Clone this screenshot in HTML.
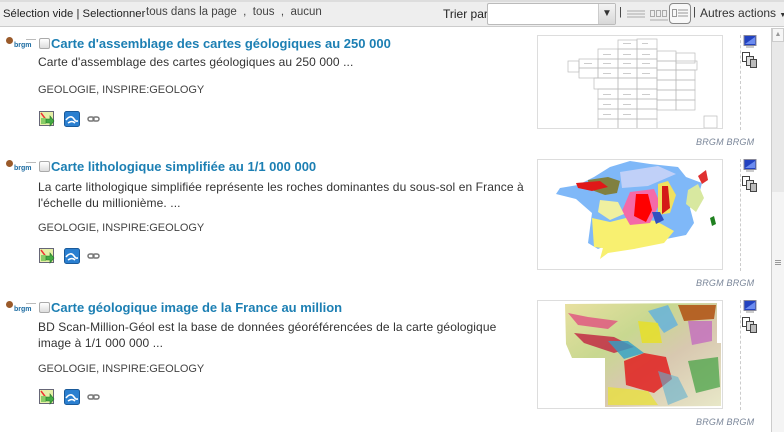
<!DOCTYPE html>
<html><head><meta charset="utf-8"><style>
*{margin:0;padding:0;box-sizing:border-box}
body{width:784px;height:432px;overflow:hidden;background:#fff;font-family:"Liberation Sans",sans-serif;position:relative;color:#333}
.abs{position:absolute}
.top{position:absolute;left:0;top:0;width:784px;height:27px;background:#eee;border-top:2px solid #ddd;border-bottom:1px solid #ccc}
.t{position:absolute;font-size:11px;white-space:nowrap}
.title{position:absolute;left:51px;font-size:13px;font-weight:bold;color:#1c7fb3;white-space:nowrap}
.desc{position:absolute;left:38px;font-size:12px;color:#333;line-height:16px;width:490px;letter-spacing:.1px}
.kw{position:absolute;left:38px;font-size:11px;color:#444}
.cb{position:absolute;left:39px;width:11px;height:11px;border:1px solid #aaa;border-radius:2px;background:linear-gradient(#fff,#ddd)}
.thumb{position:absolute;left:537px;width:186px;border:1px solid #ddd;background:#fff;overflow:hidden}
.brgm{position:absolute;left:696px;font-size:9px;font-style:italic;color:#7a8699;letter-spacing:.2px}
.dash{position:absolute;left:740px;width:0;border-left:1px dashed #ccc}
</style></head><body>
<div class="top"></div>
<div class="t" style="left:3px;top:8px;color:#222;font-size:11.3px">Sélection vide | Selectionner</div>
<div class="t" style="left:146px;top:6px;color:#444;font-size:11.5px">tous dans la page &nbsp;, &nbsp;tous &nbsp;, &nbsp;aucun</div>
<div class="t" style="left:443px;top:7px;color:#222;font-size:12px">Trier par</div>
<div class="abs" style="left:487px;top:3px;width:129px;height:22px;border:1px solid #bbb;background:#fff;border-radius:2px"></div>
<div class="abs" style="left:598px;top:4px;width:17px;height:20px;background:linear-gradient(#f4f4f4,#d8d8d8);border-left:1px solid #ccc;font-size:10px;text-align:center;line-height:20px;color:#333">&#9660;</div>
<div class="t" style="left:619px;top:6px;color:#333">|</div>
<svg class="abs" style="left:626px;top:5px" width="20" height="18"><g stroke="#aaa"><line x1="1" y1="6" x2="19" y2="6"/><line x1="1" y1="9" x2="19" y2="9"/><line x1="1" y1="12" x2="19" y2="12"/></g></svg>
<svg class="abs" style="left:649px;top:5px" width="20" height="18"><g stroke="#aaa" fill="none"><rect x="1.5" y="5.5" width="4" height="6"/><rect x="7.5" y="5.5" width="4" height="6"/><rect x="13.5" y="5.5" width="4" height="6"/><line x1="1" y1="15" x2="19" y2="15"/></g></svg>
<div class="abs" style="left:669px;top:3px;width:22px;height:21px;border:1px solid #888;border-radius:4px;background:#f8f8f8"></div>
<svg class="abs" style="left:671px;top:5px" width="18" height="18"><g stroke="#999" fill="none"><rect x="1.5" y="4.5" width="4" height="7"/><line x1="7" y1="5" x2="17" y2="5"/><line x1="7" y1="8" x2="17" y2="8"/><line x1="7" y1="11" x2="17" y2="11"/></g></svg>
<div class="t" style="left:693px;top:6px;color:#333">|</div>
<div class="t" style="left:700px;top:6px;color:#333;font-size:12px">Autres actions <span style="font-size:7px">&#9660;</span></div>

<div class="abs" style="left:771px;top:28px;width:13px;height:404px;background:#e8e8e8;border-left:1px solid #ccc"></div>
<div class="abs" style="left:772px;top:28px;width:12px;height:14px;background:#f6f6f6;border:1px solid #ccc;font-size:7px;color:#999;text-align:center;line-height:12px">&#9650;</div>
<div class="abs" style="left:772px;top:192px;width:12px;height:240px;background:#f4f4f4"></div>
<div class="abs" style="left:775px;top:260px;width:6px;height:5px;border-top:1px solid #999;border-bottom:1px solid #999"></div>
<div class="abs" style="left:775px;top:262px;width:6px;height:1px;background:#999"></div>

<div class="abs" style="left:6px;top:37px;width:7px;height:7px;border-radius:50%;background:#9a5a2a"></div>
<div class="abs" style="left:14px;top:42px;font-size:7px;color:#1a6aa0;font-weight:bold">brgm</div>
<div class="abs" style="left:26px;top:39px;width:10px;height:1px;background:#bbb"></div>
<div class="cb" style="top:38px"></div>
<div class="title" style="top:36px">Carte d'assemblage des cartes géologiques au 250 000</div>
<div class="desc" style="top:54px">Carte d'assemblage des cartes géologiques au 250 000 ...</div>
<div class="kw" style="top:84px">GEOLOGIE, INSPIRE:GEOLOGY</div>

<div class="abs" style="left:6px;top:160px;width:7px;height:7px;border-radius:50%;background:#9a5a2a"></div>
<div class="abs" style="left:14px;top:165px;font-size:7px;color:#1a6aa0;font-weight:bold">brgm</div>
<div class="abs" style="left:26px;top:162px;width:10px;height:1px;background:#bbb"></div>
<div class="cb" style="top:161px"></div>
<div class="title" style="top:159px">Carte lithologique simplifiée au 1/1 000 000</div>
<div class="desc" style="top:179px">La carte lithologique simplifiée représente les roches dominantes du sous-sol en France à l'échelle du millionième. ...</div>
<div class="kw" style="top:222px">GEOLOGIE, INSPIRE:GEOLOGY</div>

<div class="abs" style="left:6px;top:301px;width:7px;height:7px;border-radius:50%;background:#9a5a2a"></div>
<div class="abs" style="left:14px;top:306px;font-size:7px;color:#1a6aa0;font-weight:bold">brgm</div>
<div class="abs" style="left:26px;top:303px;width:10px;height:1px;background:#bbb"></div>
<div class="cb" style="top:302px"></div>
<div class="title" style="top:300px">Carte géologique image de la France au million</div>
<div class="desc" style="top:319px">BD Scan-Million-Géol est la base de données géoréférencées de la carte géologique image à 1/1 000 000 ...</div>
<div class="kw" style="top:363px">GEOLOGIE, INSPIRE:GEOLOGY</div>

<svg class="abs" style="left:38px;top:110px" width="70" height="18"><g id="ic"><rect x="1.5" y="1.5" width="14" height="14" fill="#e6f0a8" stroke="#667"/><path d="M3 3l6 8" stroke="#e33" stroke-width="1.5"/><rect x="3" y="8" width="5" height="6" fill="#8c6"/><path d="M8 9h4v-3l4 5-4 5v-3H8z" fill="#4a4" stroke="#272" stroke-width=".6"/><rect x="26.5" y="1.5" width="15" height="15" rx="2" fill="#2a7fd0" stroke="#1a5a9a"/><path d="M28 10c3-4 6-4 8-1s3 2 4 2M30 13c3-2 5-2 7 0" stroke="#fff" stroke-width="1.6" fill="none"/><rect x="50" y="7" width="6" height="4" rx="2" fill="none" stroke="#777" stroke-width="1.5"/><rect x="55" y="7" width="6" height="4" rx="2" fill="none" stroke="#777" stroke-width="1.5"/></g></svg>
<svg class="abs" style="left:38px;top:247px" width="70" height="18"><use href="#ic"/></svg>
<svg class="abs" style="left:38px;top:388px" width="70" height="18"><use href="#ic"/></svg>

<div class="dash" style="top:35px;height:95px"></div>
<div class="dash" style="top:159px;height:112px"></div>
<div class="dash" style="top:300px;height:110px"></div>

<svg class="abs" style="left:741px;top:35px" width="18" height="34"><g id="ri"><rect x="3" y="0.5" width="12" height="10" fill="#2242c0" stroke="#889"/><path d="M4 9l10-7v7z" fill="#6c8cf0"/><rect x="5" y="11" width="8" height="2" fill="#ccc"/><rect x="1.5" y="17.5" width="7" height="9" fill="#fff" stroke="#444"/><rect x="5.5" y="21.5" width="7" height="9" fill="#ddd" stroke="#444"/><rect x="9.5" y="24.5" width="6" height="8" fill="#bbb" stroke="#444"/></g></svg>
<svg class="abs" style="left:741px;top:159px" width="18" height="34"><use href="#ri"/></svg>
<svg class="abs" style="left:741px;top:300px" width="18" height="34"><use href="#ri"/></svg>

<div class="brgm" style="top:137px">BRGM BRGM</div>
<div class="brgm" style="top:278px">BRGM BRGM</div>
<div class="brgm" style="top:417px">BRGM BRGM</div>

<div class="thumb" style="top:35px;height:94px">
<svg width="186" height="94"><g fill="none" stroke="#bbb" stroke-width=".7">
<rect x="80" y="4" width="19" height="9"/><rect x="99" y="3" width="20" height="10"/>
<rect x="60" y="13" width="20" height="10"/><rect x="80" y="13" width="19" height="10"/><rect x="99" y="13" width="20" height="10"/><rect x="119" y="15" width="19" height="10"/><rect x="138" y="17" width="19" height="10"/>
<rect x="41" y="23" width="19" height="9"/><rect x="60" y="23" width="20" height="9"/><rect x="80" y="23" width="19" height="9"/><rect x="99" y="23" width="20" height="9"/><rect x="119" y="25" width="19" height="9"/><rect x="138" y="25" width="21" height="9"/>
<rect x="30" y="25" width="11" height="11"/>
<rect x="41" y="32" width="19" height="10"/><rect x="60" y="32" width="20" height="10"/><rect x="80" y="32" width="19" height="10"/><rect x="99" y="32" width="20" height="10"/><rect x="119" y="34" width="19" height="10"/><rect x="138" y="34" width="19" height="10"/>
<rect x="56" y="42" width="24" height="11"/><rect x="80" y="42" width="19" height="11"/><rect x="99" y="42" width="20" height="11"/><rect x="119" y="44" width="19" height="10"/><rect x="138" y="44" width="19" height="10"/>
<rect x="60" y="53" width="20" height="10"/><rect x="80" y="53" width="19" height="10"/><rect x="99" y="53" width="20" height="10"/><rect x="119" y="54" width="19" height="10"/><rect x="138" y="54" width="19" height="10"/>
<rect x="60" y="63" width="20" height="10"/><rect x="80" y="63" width="19" height="10"/><rect x="99" y="63" width="20" height="10"/><rect x="119" y="64" width="19" height="10"/><rect x="138" y="64" width="19" height="10"/>
<rect x="60" y="73" width="20" height="10"/><rect x="80" y="73" width="19" height="10"/><rect x="99" y="73" width="20" height="10"/>
<rect x="60" y="83" width="20" height="10"/><rect x="80" y="83" width="19" height="10"/><rect x="99" y="83" width="20" height="10"/>
<rect x="166" y="80" width="13" height="12"/></g>
<g fill="#ccc"><rect x="85" y="7" width="8" height="1"/><rect x="104" y="7" width="6" height="1"/><rect x="65" y="18" width="8" height="1"/><rect x="85" y="18" width="8" height="1"/><rect x="104" y="18" width="8" height="1"/><rect x="46" y="27" width="8" height="1"/><rect x="65" y="27" width="8" height="1"/><rect x="85" y="27" width="8" height="1"/><rect x="104" y="27" width="8" height="1"/><rect x="65" y="37" width="8" height="1"/><rect x="85" y="37" width="8" height="1"/><rect x="104" y="37" width="8" height="1"/><rect x="65" y="58" width="8" height="1"/><rect x="85" y="58" width="8" height="1"/><rect x="104" y="58" width="8" height="1"/><rect x="65" y="68" width="8" height="1"/><rect x="85" y="68" width="8" height="1"/><rect x="65" y="78" width="8" height="1"/><rect x="85" y="78" width="8" height="1"/></g></svg></div>

<div class="thumb" style="top:159px;height:111px">
<svg width="186" height="111">
<path d="M112 4l28 3 8 10 16 6-4 15-8 10 4 15-8 12-30 6-40 0-18 8-10-6 4-30-16-14-20-5 4-6 18-3 16-8 16-10 20-6z" fill="#7fb8f8"/>
<path d="M72 62l16-4 30 3 18 10-10 12-30 6-26 4-8 6z" fill="#f8f070"/>
<path d="M54 58l18 4 10 22-10 5 -16-2z" fill="#f8f070"/>
<path d="M50 20l20-3 12 4-3 12-12 2-16-6z" fill="#808040"/>
<path d="M38 23l24-2 8 6-16 4-14-3z" fill="#e01818"/>
<path d="M92 32l24-3 6 14 -10 20-20 2-8-14z" fill="#f46aa8"/>
<path d="M98 34l12 0 4 16-6 12-12-6z" fill="#f00"/>
<path d="M120 24l10-3 8 14-6 18-12 2z" fill="#f0e060"/>
<path d="M124 26l6 0 2 22-8 6z" fill="#d41818"/>
<path d="M82 12l38-6 18 8-28 12-26 2z" fill="#c0d0f8"/>
<path d="M62 40l18 2 6 12-14 6-12-8z" fill="#f0f0a0"/>
<path d="M150 30l10-6 6 14-8 14-10-8z" fill="#d8e8a0"/>
<path d="M160 16l8-6 2 10-6 4z" fill="#e03030"/>
<path d="M114 52l8 0 4 8-8 4z" fill="#3050c0"/>
<path d="M172 58l4-2 2 8-4 2z" fill="#208020"/>
</svg></div>

<div class="thumb" style="top:300px;height:109px">
<svg width="186" height="109"><defs><linearGradient id="g3" x1="0" y1="0" x2="1" y2="1"><stop offset="0" stop-color="#e8e0a0"/><stop offset=".35" stop-color="#c8d890"/><stop offset=".6" stop-color="#d8c8b0"/><stop offset="1" stop-color="#e8e8c8"/></linearGradient></defs>
<path d="M27 3l152-1 0 40 4 0 0 63-116 1 0-49-33 0-6-14z" fill="url(#g3)"/>
<path d="M30 12l20 4 30 4-10 8-30-4z" fill="#e05080" opacity=".8"/>
<path d="M36 32l40 4 20 10-20 6-30-10z" fill="#c02040" opacity=".8"/>
<path d="M86 60l20-8 22 4 6 22-18 14-28-8z" fill="#e02020" opacity=".85"/>
<path d="M70 40l20 0 16 12-20 6z" fill="#30a0c8" opacity=".8"/>
<path d="M110 10l20-6 10 20-14 8z" fill="#60b0e0" opacity=".8"/>
<path d="M140 4l38 0 -2 14-30 2z" fill="#b05010" opacity=".85"/>
<path d="M150 20l24 0 0 20-20 4z" fill="#c060c0" opacity=".7"/>
<path d="M150 60l30-4 2 30-24 6z" fill="#40a040" opacity=".7"/>
<path d="M100 20l20 2 4 20-20 0z" fill="#e8e020" opacity=".8"/>
<path d="M70 86l40 4 10 14-50 0z" fill="#e8e040" opacity=".8"/>
<path d="M120 70l20 6 10 20-20 8z" fill="#60b0d0" opacity=".6"/>
</svg></div>
</body></html>
